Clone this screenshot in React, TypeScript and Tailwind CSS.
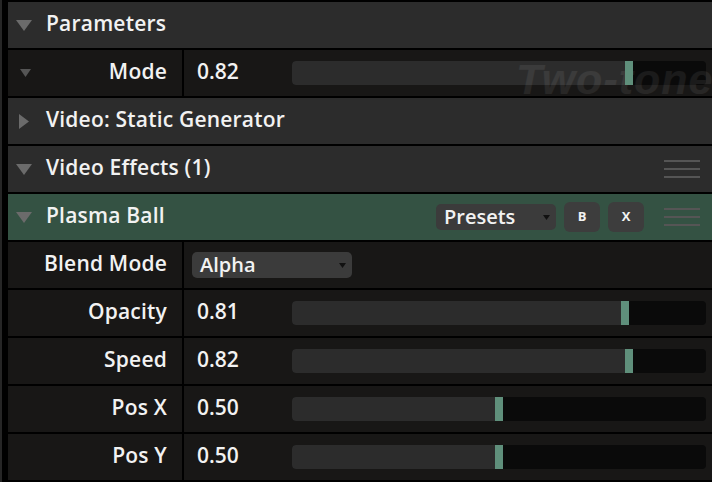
import React from "react";

type Param = { label: string; value: number };

const params: Param[] = [
  { label: "Opacity", value: 0.81 },
  { label: "Speed", value: 0.82 },
  { label: "Pos X", value: 0.5 },
  { label: "Pos Y", value: 0.5 },
];

function DownTri({ size = "lg" }: { size?: "lg" | "sm" }) {
  if (size === "sm") {
    return (
      <svg width="11" height="8" viewBox="0 0 11 8">
        <polygon points="0,0 11,0 5.5,8" fill="#555" />
      </svg>
    );
  }
  return (
    <svg width="16" height="11" viewBox="0 0 16 11">
      <polygon points="0,0 16,0 8,11" fill="#6b6b6b" />
    </svg>
  );
}

function RightTri() {
  return (
    <svg width="10" height="15" viewBox="0 0 10 15">
      <polygon points="0,0 10,7.5 0,15" fill="#6b6b6b" />
    </svg>
  );
}

function Grip() {
  return (
    <div className="flex flex-col gap-[6px] w-[36px]">
      <div className="h-[2px] bg-[#555]" />
      <div className="h-[2px] bg-[#555]" />
      <div className="h-[2px] bg-[#555]" />
    </div>
  );
}

function Header({
  title,
  open = true,
  green = false,
  children,
}: {
  title: string;
  open?: boolean;
  green?: boolean;
  children?: React.ReactNode;
}) {
  return (
    <div
      className={`h-[46px] flex items-center pr-[12px] ${
        green ? "bg-[#345243]" : "bg-[#2c2c2c]"
      }`}
    >
      <div className="pl-[8px] pr-[14px]">
        <div className="w-[16px] flex justify-center">{open ? <DownTri /> : <RightTri />}</div>
      </div>
      <span className="flex-1 text-[21px] font-semibold text-[#f2f2f2] tracking-[0.2px] -mt-[3px]">
        {title}
      </span>
      {children}
    </div>
  );
}

function Slider({ value }: { value: number }) {
  const left = value * 406;
  return (
    <div className="relative h-[24px] w-[414px] rounded-[4px] bg-[#0a0a0a] overflow-hidden">
      <div className="absolute inset-y-0 left-0 bg-[#2c2c2c]" style={{ width: left }} />
      <div className="absolute inset-y-0 w-[8px] bg-[#5f8f7b] z-10" style={{ left }} />
    </div>
  );
}

function ParamRow({
  label,
  children,
  tri = false,
  watermark = false,
}: {
  label: string;
  children: React.ReactNode;
  tri?: boolean;
  watermark?: boolean;
}) {
  return (
    <div className="relative h-[46px] flex bg-[#181716] overflow-hidden">
      <div className="w-[174px] flex items-center pr-[15px]">
        <div className="w-[30px] pl-[12px] flex">{tri && <DownTri size="sm" />}</div>
        <span className="flex-1 text-right text-[21px] font-semibold text-[#f2f2f2] tracking-[0.2px] -mt-[2px]">
          {label}
        </span>
      </div>
      <div className="w-[2px] bg-black" />
      <div className="flex-1 flex items-center">{children}</div>
      {watermark && (
        <span className="absolute left-[508px] top-[1px] whitespace-nowrap text-[43px] font-bold italic text-white/[0.07] font-['Liberation_Sans'] tracking-[1px] leading-[56px] pointer-events-none">
          Two-tone
        </span>
      )}
    </div>
  );
}

function ValueSlider({ value }: { value: number }) {
  return (
    <>
      <span className="w-[108px] pl-[13px] text-[21px] font-semibold text-[#f2f2f2] -mt-[2px]">
        {value.toFixed(2)}
      </span>
      <Slider value={value} />
    </>
  );
}

function Dropdown({ label, width }: { label: string; width: string }) {
  return (
    <div
      className={`h-[26px] ${width} rounded-[5px] bg-[#3b3b3b] flex items-center pl-[8px] pr-[6px]`}
    >
      <span className="flex-1 text-[20px] font-semibold text-[#f2f2f2] leading-none -mt-[1px]">
        {label}
      </span>
      <svg width="7" height="5" viewBox="0 0 7 5">
        <polygon points="0,0 7,0 3.5,5" fill="#111" />
      </svg>
    </div>
  );
}

function SmallBtn({ label }: { label: string }) {
  return (
    <div className="w-[36px] h-[30px] rounded-[6px] bg-[#3d3d3d] flex items-center justify-center text-[13px] font-bold text-[#f2f2f2]">
      {label}
    </div>
  );
}

export default function App() {
  return (
    <div className="w-[712px] h-[482px] flex bg-black overflow-hidden font-['Open_Sans',sans-serif]">
      <div className="w-[2px] bg-[#262626]" />
      <div className="w-[6px]" />
      <div className="flex-1 flex flex-col gap-[2px] pt-[2px]">
        <Header title="Parameters" />
        <ParamRow label="Mode" tri watermark>
          <ValueSlider value={0.82} />
        </ParamRow>
        <Header title="Video: Static Generator" open={false} />
        <Header title="Video Effects (1)">
          <Grip />
        </Header>
        <Header title="Plasma Ball" green>
          <div className="flex items-center gap-[8px] mr-[20px]">
            <Dropdown label="Presets" width="w-[120px]" />
            <SmallBtn label="B" />
            <SmallBtn label="X" />
          </div>
          <Grip />
        </Header>
        <ParamRow label="Blend Mode">
          <div className="pl-[8px]">
            <Dropdown label="Alpha" width="w-[160px]" />
          </div>
        </ParamRow>
        {params.map((p) => (
          <ParamRow key={p.label} label={p.label}>
            <ValueSlider value={p.value} />
          </ParamRow>
        ))}
      </div>
    </div>
  );
}
